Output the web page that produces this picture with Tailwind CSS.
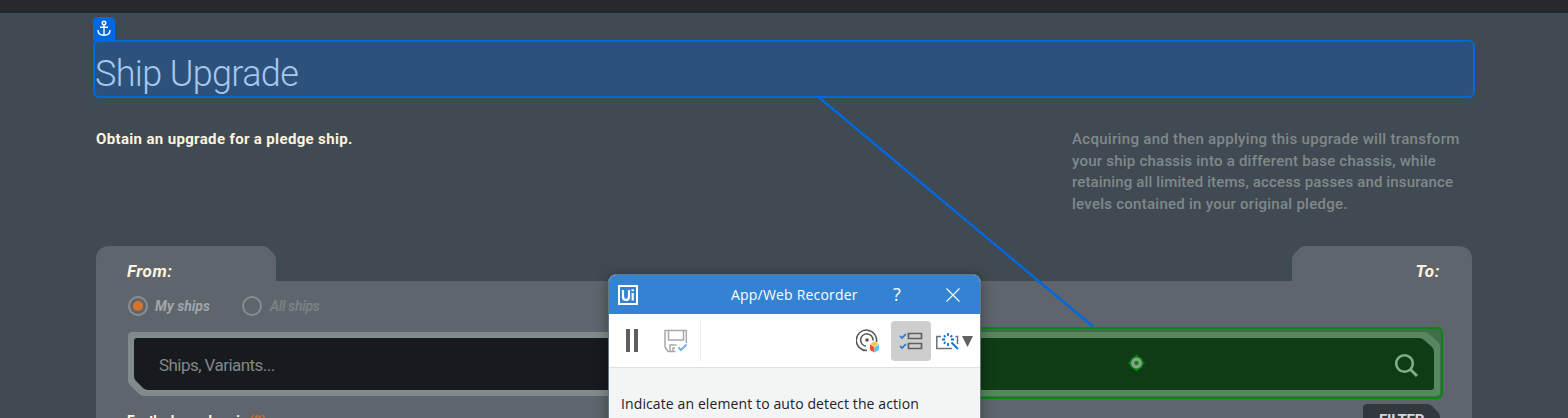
<!DOCTYPE html>
<html lang="en">
<head>
<meta charset="utf-8">
<title>Ship Upgrade</title>
<script src="https://cdn.jsdelivr.net/npm/@tailwindcss/browser@4"></script>
</head>
<body class="relative h-[418px] w-[1568px] overflow-hidden bg-[#404a52] font-[Roboto,sans-serif]">
  <header class="h-[13px] bg-[#262a2e]"></header>
  <main class="px-24">
    <h1 class="flex h-[84px] items-end whitespace-nowrap pb-px text-[36px] leading-[44px] font-light tracking-[-0.65px] text-[#a6c7f0]"><span class="relative z-10 -ml-px">Ship Upgrade</span></h1>
    <section class="flex h-[149px] justify-between pt-8 text-[15px] leading-[21.7px] whitespace-nowrap">
      <p class="font-bold tracking-[0.35px] text-[#fff3df]">Obtain an upgrade for a pledge ship.</p>
      <div class="w-[400px] font-medium text-[#81888a]">
        <p class="tracking-[0.31px]">Acquiring and then applying this upgrade will transform</p>
        <p class="tracking-[0.23px]">your ship chassis into a different base chassis, while</p>
        <p class="tracking-[0.14px]">retaining all limited items, access passes and insurance</p>
        <p class="tracking-[0.26px]">levels contained in your original pledge.</p>
      </div>
    </section>
    <section class="relative h-[172px]">
      <svg class="absolute inset-0" width="1376" height="172" fill="#5e656c"><path d="M0 172V14Q0 0 14 0H166Q170 0 172 2L178 8Q180 10 180 14V35H1196V14Q1196 10 1198 8L1204 2Q1206 0 1210 0H1362Q1376 0 1376 14V172Z"/></svg>
      <div class="relative flex h-[50px] justify-between px-8 pt-[13px] text-[17px] leading-6 font-bold italic text-[#fff3df]">
        <h2 class="-ml-px tracking-[0.5px]">From:</h2><h2 class="tracking-[0.6px]">To:</h2>
      </div>
      <div class="relative flex items-center pl-8 text-[14px] leading-5 font-bold italic">
        <span class="flex size-5 items-center justify-center rounded-full border-2 border-[#899092]"><i class="size-[10px] rounded-full bg-[#d8732c]"></i></span>
        <span class="ml-[7px] w-[87px] text-[#a1a6a8]">My ships</span>
        <span class="size-5 rounded-full border-2 border-[#858d90]"></span>
        <span class="ml-2 tracking-[-0.35px] text-[#7a8185]">All ships</span>
      </div>
      <div class="relative mt-4 flex h-16 justify-between px-8">
        <div class="relative h-16 w-[640px]">
          <svg class="absolute inset-0" width="640" height="64"><path d="M4 0H640V64H16Q13 64 11 62L2 53Q0 51 0 48V4Q0 0 4 0Z" fill="#818a8c"/><path d="M9 6H640V58H20Q17 58 15 56L8 49Q6 47 6 44V9Q6 6 9 6Z" fill="#171b1f"/></svg>
          <span class="absolute top-[21px] left-[31px] text-[17px] leading-6 tracking-[-0.55px] text-[#81878a]">Ships, Variants...</span>
        </div>
        <div class="relative h-16 w-[640px]">
          <svg class="absolute inset-0" width="640" height="64"><path d="M0 0H624Q627 0 629 2L638 10Q640 12 640 16V60Q640 64 636 64H0Z" fill="#818a8c"/><path d="M0 6H619Q622 6 624 8L632 15Q634 17 634 20V55Q634 58 631 58H0Z" fill="#171b1f"/><g fill="none" stroke="#b7c7c4" stroke-width="2.6"><circle cx="604.500" cy="31.500" r="8.300"/><path d="M610.500 37.500L617 44" stroke-width="3"/></g></svg>
        </div>
      </div>
      <div class="relative mt-2 flex justify-between px-8 text-[14px] leading-5 font-bold text-[#fff3df]">
        <div class="-ml-px pt-[7px] tracking-[-0.5px] whitespace-nowrap">For the base chassis <span class="text-[#c7692e]">(0)</span></div>
        <div class="relative h-8 w-[77px]"><svg class="absolute inset-0" width="77" height="32"><path d="M0 32V4Q0 0 4 0H64Q67 0 69 2L75 8Q77 10 77 13V32Z" fill="#31383e"/></svg><span class="absolute top-[8px] left-4 text-[15px] leading-[17px] tracking-[-0.2px] text-[#d5d8da]">FILTER</span></div>
      </div>
    </section>
  </main>

  <!-- Selection highlights and connector -->
  <div class="absolute top-[39.500px] left-[92.500px] h-[58px] w-[1382.500px] rounded-md border-2 border-[#0068df] bg-[#0068df]/30"></div>
  <div class="absolute top-[17px] left-[93px] flex h-[24px] w-[22px] justify-center rounded-t bg-[#0068df] pt-[3px]">
    <svg width="14" height="17" fill="none" stroke="white" stroke-width="1.4"><circle cx="7" cy="3" r="1.8"/><path d="M7 5V16M3 7.3H11M1 10Q1 15.2 7 15.2Q13 15.2 13 10"/></svg>
  </div>
  <svg class="absolute top-[90px] left-[800px]" width="310" height="245" stroke="#0068df" stroke-width="2.4"><path d="M18.500 7L293 236.500"/></svg>
  <div class="absolute top-[326.500px] left-[900px] h-[72px] w-[543px] rounded-md border-2 border-[#068a0e] bg-[#008300]/32"></div>
  <svg class="absolute top-[354px] left-[1127px]" width="19" height="18"><path d="M9.500 .5L12 3H7ZM18 9L15.500 11V7ZM9.500 17.500L7 15H12ZM1 9L3.500 7V11Z" fill="#068a0e"/><circle cx="9.500" cy="9" r="6.800" fill="#068a0e"/><circle cx="9.500" cy="9" r="3.800" fill="none" stroke="#8ba18e" stroke-width="3.200"/></svg>

  <!-- Recorder window -->
  <div class="absolute top-[274px] left-[608px] h-[160px] w-[373px] overflow-hidden rounded-t-lg border border-[#667784] bg-[#f3f5f5] font-['Open_Sans',sans-serif] shadow-[0_2px_14px_rgba(0,0,0,0.35)]">
    <div class="relative flex h-[39px] items-center bg-[#3482d2] text-white">
      <svg class="ml-[9px]" width="20" height="20" fill="none" stroke="white"><rect x="1" y="1" width="18" height="18" stroke-width="2"/><path d="M5 5V11.500Q5 15 8 15Q11 15 11 11.500V5M14.700 8V15.500M14.700 4.200V6.300" stroke-width="2.200"/></svg>
      <span class="ml-[93px] w-[128px] text-[14px] tracking-[0.19px] whitespace-nowrap">App/Web Recorder</span>
      <span class="ml-[34px] w-3 text-[18px]">?</span>
      <svg class="ml-[41px]" width="14" height="14" stroke="white" stroke-width="1.100"><path d="M.5.5L13.500 13.500M13.500.5L.5 13.500"/></svg>
    </div>
    <div class="flex h-[54px] items-center border-b border-[#dfe2e2] bg-white">
      <svg class="ml-[17px]" width="12" height="23" fill="#5c5e60"><path d="M0 0H4V23H0ZM8 0H12V23H8Z"/></svg>
      <svg class="ml-[26px]" width="24" height="24" fill="none" stroke="#a9a9a9" stroke-width="1.500"><path d="M22.300 14V1.500H1V18L4 22.500H11.500M4.500 2V11H19.500V2M6 22V16H12.500M9 22V19H11"/><path d="M14.500 18.500L17 21L22.500 15.500" stroke="#79aeea" stroke-width="2"/></svg>
      <i class="ml-[12px] h-10 w-px bg-[#ececec]"></i>
      <svg class="ml-[155px]" width="24" height="24" fill="none" stroke="#555" stroke-width="1.500"><path d="M11 21.500A10.200 10.200 0 1 1 20.500 13M10 17.200A6.200 6.200 0 1 1 17 11.500"/><circle cx="11" cy="11" r="1.800" fill="#555" stroke="none"/><g stroke="none"><path d="M14 15L18.500 12.500L23 15L18.500 17.500Z" fill="#f4c94b"/><path d="M14 15.500L18.500 18V23.500L14 21Z" fill="#f0522b"/><path d="M18.500 18L23 15.500V21L18.500 23.500Z" fill="#5bc8f3"/></g></svg>
      <span class="ml-[11px] flex size-10 items-center justify-center rounded bg-[#cecece]"><svg width="24" height="18" fill="none" stroke="#5d6062" stroke-width="1.700"><path d="M9.500 1.500H22.500V6.500H9.500ZM9.500 11.500H22.500V16.500H9.500Z"/><path d="M1 4L3 6L7 2M1 14L3 16L7 12" stroke="#2379cf"/></svg></span>
      <svg class="ml-[4px]" width="39" height="22" fill="none"><path d="M6 6.500H1.800V18.500H17M20.500 6.500H22.500V14" stroke="#69717b" stroke-width="1.500"/><path d="M13 3V6M13 13V16M7 9.500H10M16 9.500H19M8.800 5.300L10.500 7M17.200 5.300L15.500 7M8.800 13.700L10.500 12M16.500 12.500L23 19" stroke="#1371dc" stroke-width="1.800"/><path d="M27 6H38L32.500 17Z" fill="#606264"/></svg>
    </div>
    <p class="mt-[26px] ml-[12px] text-[14px] leading-5 tracking-[0.11px] whitespace-nowrap text-[#202224]">Indicate an element to auto detect the action</p>
  </div>
</body>
</html>
